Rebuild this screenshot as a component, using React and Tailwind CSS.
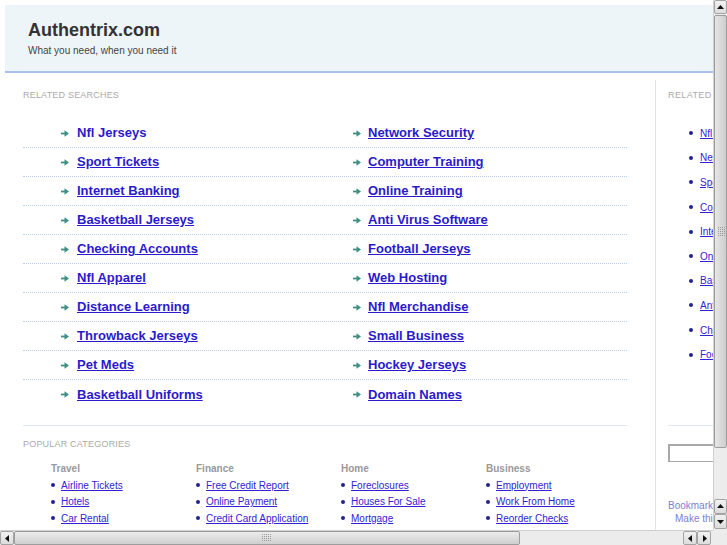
import React from 'react'

const related = [
  ['Nfl Jerseys', 'Network Security'],
  ['Sport Tickets', 'Computer Training'],
  ['Internet Banking', 'Online Training'],
  ['Basketball Jerseys', 'Anti Virus Software'],
  ['Checking Accounts', 'Football Jerseys'],
  ['Nfl Apparel', 'Web Hosting'],
  ['Distance Learning', 'Nfl Merchandise'],
  ['Throwback Jerseys', 'Small Business'],
  ['Pet Meds', 'Hockey Jerseys'],
  ['Basketball Uniforms', 'Domain Names'],
]

const sideLinks = [
  'Nfl Jerseys',
  'Network Security',
  'Sport Tickets',
  'Computer Training',
  'Internet Banking',
  'Online Training',
  'Basketball Jerseys',
  'Anti Virus Software',
  'Checking Accounts',
  'Football Jerseys',
]

const categories = [
  { title: 'Travel', links: ['Airline Tickets', 'Hotels', 'Car Rental'] },
  { title: 'Finance', links: ['Free Credit Report', 'Online Payment', 'Credit Card Application'] },
  { title: 'Home', links: ['Foreclosures', 'Houses For Sale', 'Mortgage'] },
  { title: 'Business', links: ['Employment', 'Work From Home', 'Reorder Checks'] },
]

const Arrow = () => (
  <svg width="8" height="7" viewBox="0 0 8 7" className="shrink-0">
    <path d="M0 3.5h4" stroke="#3f8f84" strokeWidth="1.8" />
    <path d="M3.5 0.3l4.5 3.2-4.5 3.2z" fill="#3f8f84" />
  </svg>
)

const Bullet = () => <span className="w-[4px] h-[4px] rounded-full bg-[#23238f] shrink-0" />

// kleine Pfeile der Bildlaufleiste
const Tri = ({ dir }) => {
  const d = {
    up: 'M1 6L4.5 2 8 6z',
    down: 'M1 3L4.5 7 8 3z',
    left: 'M6 1L2 4.5 6 8z',
    right: 'M3 1L7 4.5 3 8z',
  }[dir]
  return (
    <svg width="9" height="9" viewBox="0 0 9 9">
      <path d={d} fill="#111" />
    </svg>
  )
}

const Grip = () => (
  <svg width="10" height="8" viewBox="0 0 10 8">
    {[0, 1, 2, 3].map((r) =>
      [0, 1, 2, 3, 4].map((c) => (
        <rect key={`${r}-${c}`} x={c * 2} y={r * 2} width="1" height="1" fill="#9a9a9a" />
      ))
    )}
  </svg>
)

const ScrollBtn = ({ dir, className }) => (
  <div
    className={`flex items-center justify-center bg-gradient-to-b from-[#f2f2f2] to-[#dcdcdc] border border-[#a3a3a3] rounded-[2px] ${className}`}
  >
    <Tri dir={dir} />
  </div>
)

export default function App() {
  return (
    <div className="w-[727px] h-[545px] flex flex-col overflow-hidden bg-white font-['Liberation_Sans',Arial,sans-serif]">
      <div className="flex h-[530px]">
        {/* sichtbarer Seitenausschnitt */}
        <div className="w-[713px] h-[530px] overflow-hidden">
          <div className="w-[1000px] p-[5px]">
            <div className="h-[68px] bg-[#eef5f9] border-b-2 border-[#a9c1e8] pl-[23px] pt-[14px]">
              <div className="text-[18px] leading-[22px] font-bold text-[#333]">Authentrix.com</div>
              <div className="mt-[4px] text-[10px] leading-[12px] text-[#444]">What you need, when you need it</div>
            </div>

            <div className="flex mt-[7px]">
              {/* Hauptspalte */}
              <div className="w-[651px] border-r border-[#d9e4f4] pl-[18px] pt-[10px] h-[460px]">
                <div className="text-[9px] leading-[11px] text-[#aaa] uppercase tracking-[0.2px]">Related Searches</div>
                <div className="w-[604px] mt-[18px] pb-[16px] border-b border-[#dfe8f4]">
                  {related.map(([a, b], i) => (
                    <div
                      key={a}
                      className={`flex items-center h-[29px] pl-[38px] ${
                        i < related.length - 1 ? 'border-b border-dotted border-[#b9d0ea]' : ''
                      }`}
                    >
                      <div className="w-[292px] flex items-center gap-[8px]">
                        <Arrow />
                        <a className={`text-[13px] font-bold text-[#2b1acc] ${i === 0 ? '' : 'underline'}`}>{a}</a>
                      </div>
                      <div className="flex items-center gap-[7px]">
                        <Arrow />
                        <a className="text-[13px] font-bold text-[#2b1acc] underline">{b}</a>
                      </div>
                    </div>
                  ))}
                </div>

                <div className="mt-[13px] text-[9px] leading-[11px] text-[#aaa] uppercase tracking-[0.2px]">Popular Categories</div>
                <div className="flex pl-[28px] mt-[11px]">
                  {categories.map((c) => (
                    <div key={c.title} className="w-[145px]">
                      <div className="text-[10px] leading-[16px] font-bold text-[#999]">{c.title}</div>
                      {c.links.map((l) => (
                        <div key={l} className="flex items-center gap-[6px] h-[16.5px]">
                          <Bullet />
                          <a className="text-[10px] text-[#3322d4] underline whitespace-nowrap">{l}</a>
                        </div>
                      ))}
                    </div>
                  ))}
                </div>
              </div>

              {/* rechte Spalte */}
              <div className="w-[180px] pl-[12px] pt-[10px]">
                <div className="text-[9px] leading-[11px] text-[#aaa] uppercase tracking-[0.4px]">Related Searches</div>
                <div className="mt-[20px] pl-[21px]">
                  {sideLinks.map((l) => (
                    <div key={l} className="flex items-center gap-[7px] h-[24.6px]">
                      <Bullet />
                      <a className="text-[10px] text-[#3322d4] underline whitespace-nowrap">{l}</a>
                    </div>
                  ))}
                </div>
                <div className="mt-[58px] border-t border-[#dfe8f4]" />
                <div className="mt-[18px] h-[18px] w-[150px] border border-[#a8a8a8] border-t-2 border-l-2 bg-white" />
                <div className="mt-[37px] text-[10px] leading-[13px] text-[#7d80d0]">Bookmark this page</div>
                <div className="pl-[7px] text-[10px] leading-[13px] text-[#7d80d0]">Make this your homepage</div>
              </div>
            </div>
          </div>
        </div>

        {/* senkrechte Bildlaufleiste */}
        <div className="w-[14px] h-[530px] flex flex-col bg-[#ececec] border-l border-[#d0d0d0]">
          <ScrollBtn dir="up" className="h-[14px]" />
          <div className="h-[433px] mt-[1px] bg-gradient-to-r from-[#e6e6e6] to-[#cdcdcd] border border-[#9d9d9d] rounded-[2px] flex items-center justify-center">
            <div className="rotate-90">
              <Grip />
            </div>
          </div>
          <div className="flex-1" />
          <ScrollBtn dir="up" className="h-[15px]" />
          <ScrollBtn dir="down" className="h-[15px] mb-[1px]" />
        </div>
      </div>

      {/* waagrechte Bildlaufleiste */}
      <div className="flex h-[15px]">
        <div className="w-[713px] flex bg-[#ececec] border-t border-[#d0d0d0]">
          <ScrollBtn dir="left" className="w-[14px]" />
          <div className="w-[506px] bg-gradient-to-b from-[#ececec] to-[#cfcfcf] border border-[#9d9d9d] rounded-[2px] flex items-center justify-center">
            <Grip />
          </div>
          <div className="flex-1" />
          <ScrollBtn dir="left" className="w-[14px]" />
          <ScrollBtn dir="right" className="w-[14px] mr-[2px]" />
        </div>
        <div className="w-[14px] bg-[#ececec]" />
      </div>
    </div>
  )
}
